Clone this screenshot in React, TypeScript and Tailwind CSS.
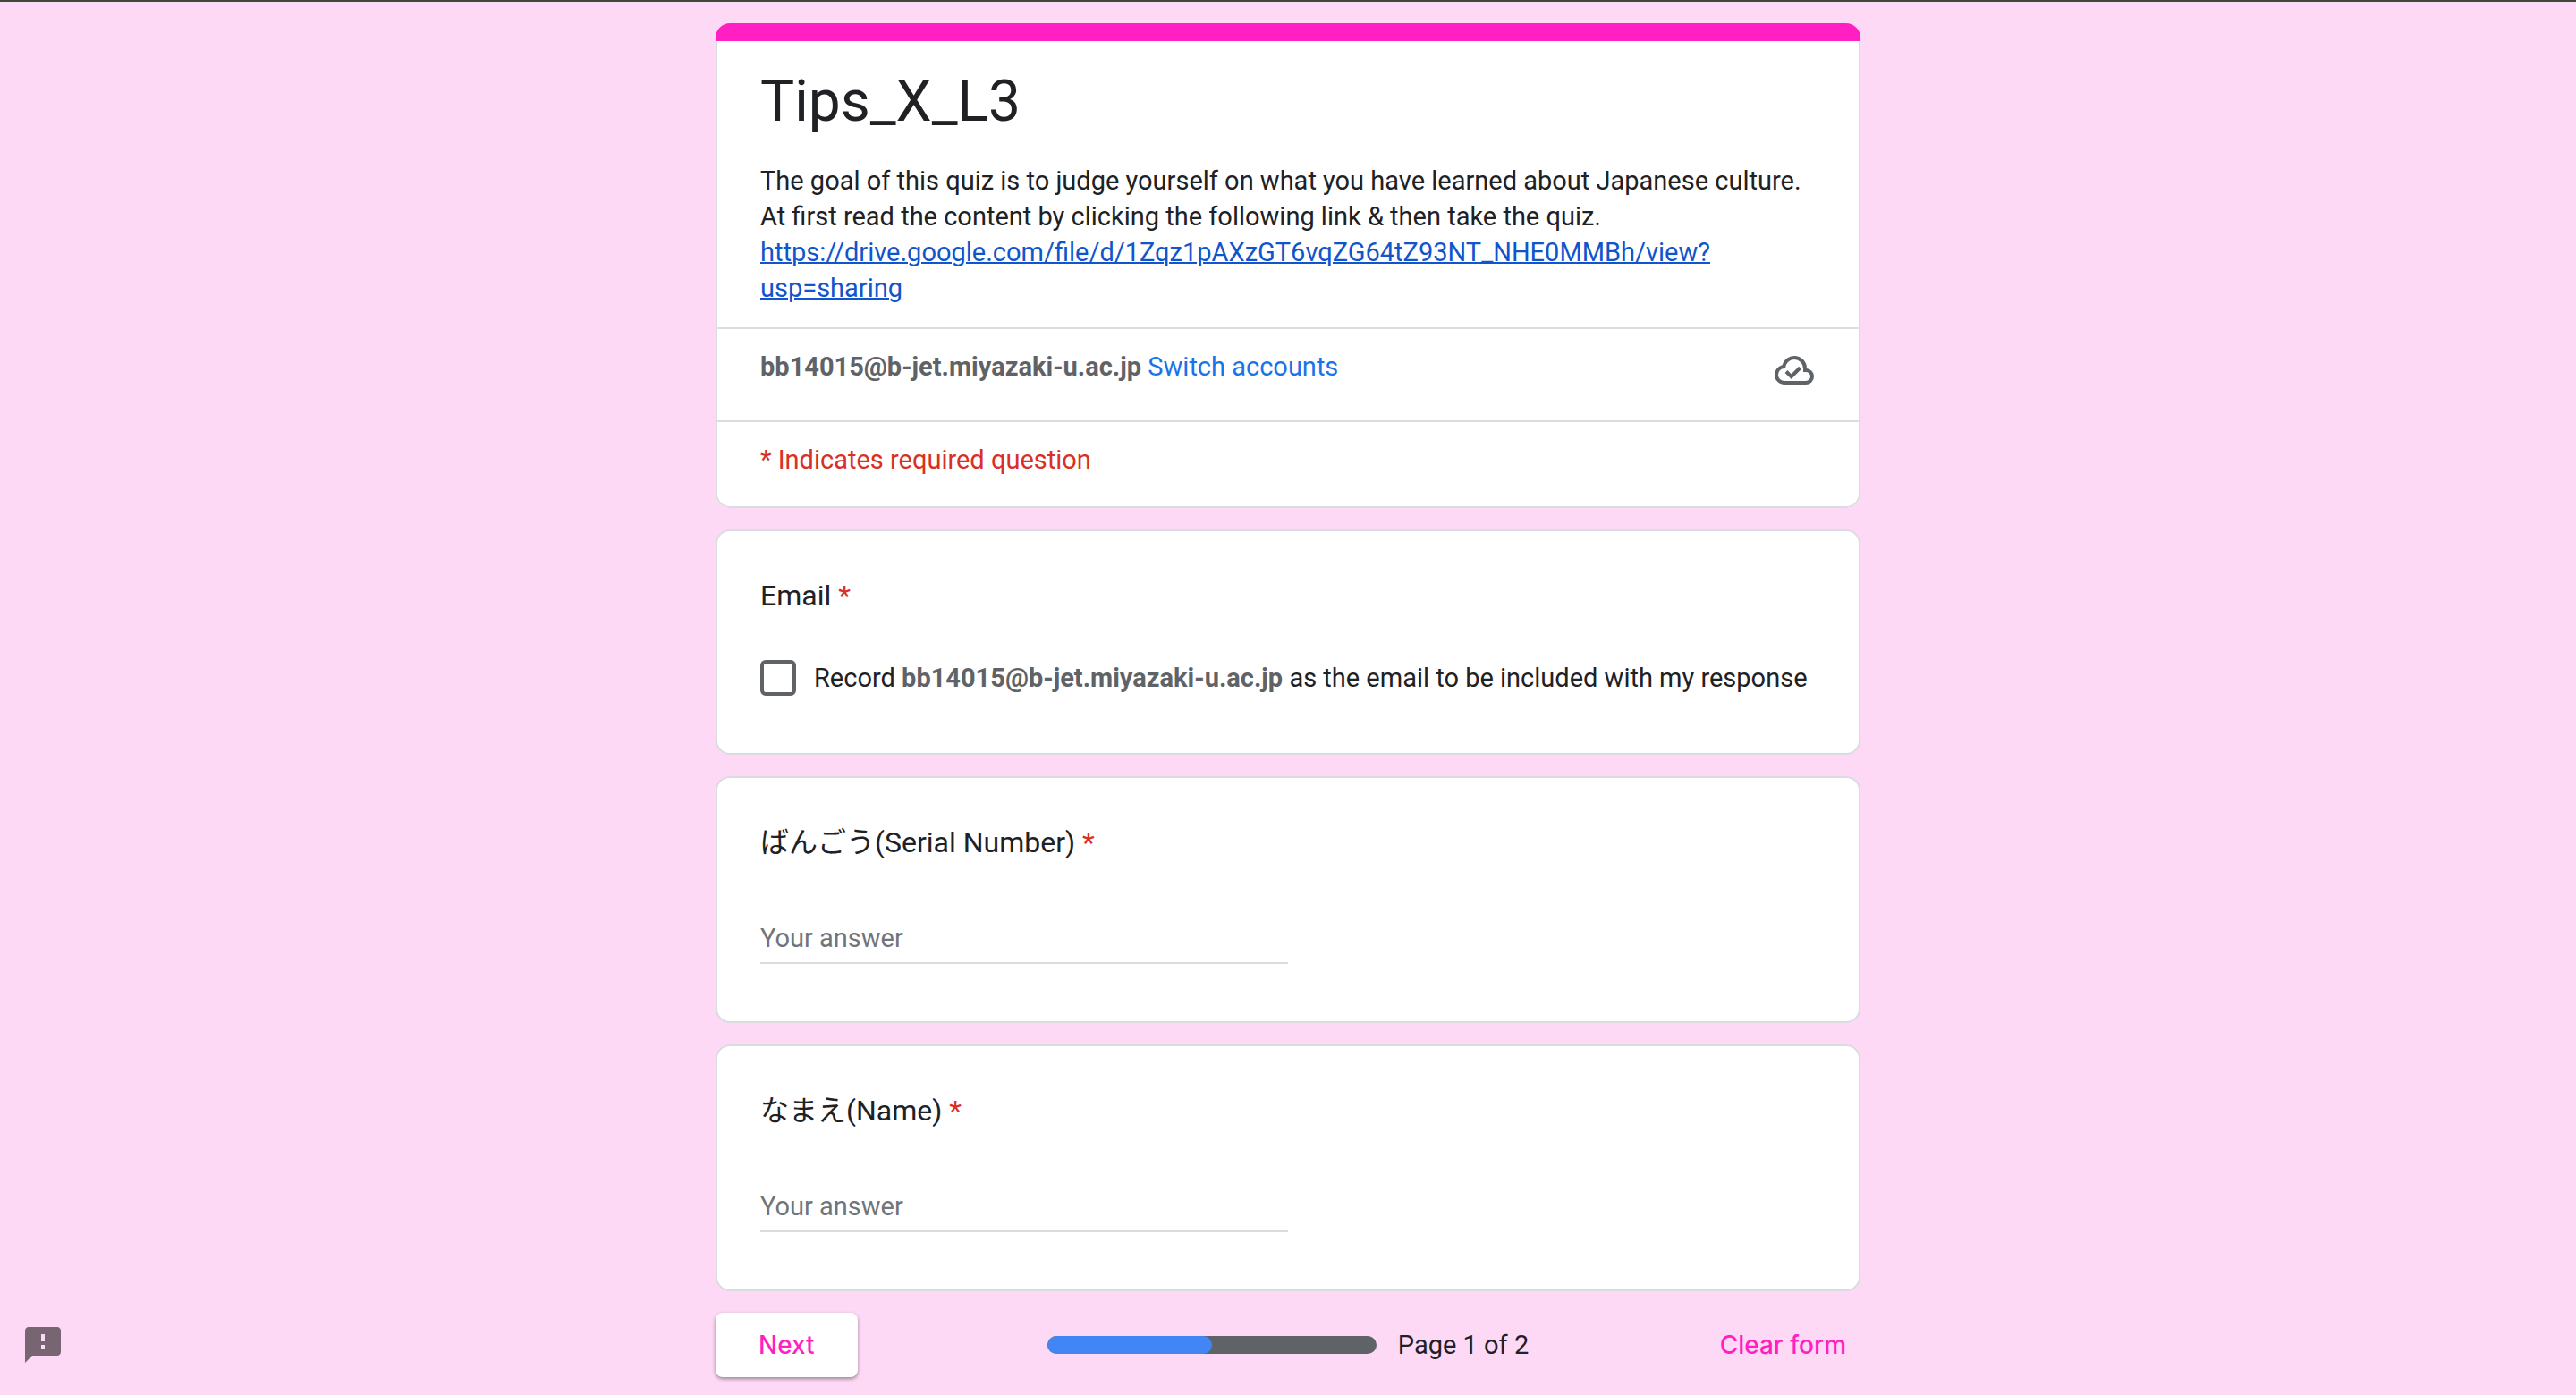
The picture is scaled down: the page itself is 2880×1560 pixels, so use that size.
import type { ReactNode } from "react";

const EMAIL = "bb14015@b-jet.miyazaki-u.ac.jp";

function Card({ children }: { children: ReactNode }) {
  return (
    <section className="rounded-2xl border-2 border-[#dadce0] bg-white px-12 pt-12 pb-16">
      {children}
    </section>
  );
}

function Required() {
  return <span className="text-[#d93025]">*</span>;
}

function TextQuestion({ id, label }: { id: string; label: string }) {
  return (
    <Card>
      <label htmlFor={id} className="block text-[32px] leading-[48px]">
        {label} <Required />
      </label>
      <input
        id={id}
        type="text"
        placeholder="Your answer"
        className="mt-14 block h-14 w-1/2 border-b-2 border-[#dadce0] bg-transparent outline-none placeholder:text-[#70757a]"
      />
    </Card>
  );
}

function CloudDoneIcon() {
  return (
    <svg viewBox="0 -960 960 960" className="size-12 fill-[#5f6368]" aria-label="Saved" role="img">
      <path d="m414-280 226-226-58-58-169 169-84-84-57 57 142 142ZM260-160q-91 0-155.5-63T40-377q0-78 47-139t123-78q25-92 100-149t170-57q117 0 198.5 81.5T760-520q69 8 114.5 59.5T920-340q0 75-52.5 127.5T740-160H260Zm0-80h480q42 0 71-29t29-71q0-42-29-71t-71-29h-60v-80q0-83-58.5-141.5T480-720q-83 0-141.5 58.5T280-520h-20q-58 0-99 41t-41 99q0 58 41 99t99 41Z" />
    </svg>
  );
}

export default function App() {
  return (
    <div className="min-h-screen border-t-2 border-[#3f4739] bg-[#fdd9f5] pt-6 font-['Roboto','Noto_Sans_CJK_JP',sans-serif] text-[29px] leading-10 text-[#202124]">
      <main className="mx-auto w-full max-w-[1280px]">
        <form className="flex flex-col gap-6" onSubmit={(e) => e.preventDefault()}>
          <header className="overflow-hidden rounded-2xl bg-white">
            <div className="h-5 bg-[#ff1fc2]" />
            <div className="rounded-b-2xl border-2 border-t-0 border-[#dadce0]">
              <div className="px-12 py-6">
                <h1 className="text-[64px] leading-[88px]">Tips_X_L3</h1>
                <p className="mt-6">
                  The goal of this quiz is to judge yourself on what you have learned about Japanese culture.
                  <br />
                  At first read the content by clicking the following link &amp; then take the quiz.
                  <br />
                  <a href="#drive" className="text-[#1155cc] underline decoration-2">
                    https://drive.google.com/file/d/1Zqz1pAXzGT6vqZG64tZ93NT_NHE0MMBh/view?
                    <wbr />
                    usp=sharing
                  </a>
                </p>
              </div>
              <div className="flex items-start justify-between border-t-2 border-[#dadce0] px-12 pt-[22px] pb-8">
                <p>
                  <b className="text-[#5f6368]">{EMAIL}</b>{" "}
                  <a href="#switch" className="text-[#1a73e8]">Switch accounts</a>
                </p>
                <CloudDoneIcon />
              </div>
              <p className="border-t-2 border-[#dadce0] px-12 pt-[22px] pb-8 text-[#d93025]">
                * Indicates required question
              </p>
            </div>
          </header>

          <Card>
            <h2 className="text-[32px] leading-[48px]">
              Email <Required />
            </h2>
            <label className="mt-12 flex items-center gap-5">
              <input
                type="checkbox"
                className="size-10 shrink-0 appearance-none rounded-md border-4 border-[#5f6368] bg-white checked:bg-[#5f6368]"
              />
              <span>
                Record <b className="text-[#5f6368]">{EMAIL}</b> as the email to be included with my response
              </span>
            </label>
          </Card>

          <TextQuestion id="serial" label="ばんごう(Serial Number)" />
          <TextQuestion id="name" label="なまえ(Name)" />

          <footer className="grid grid-cols-[1fr_auto_1fr] items-center">
            <button
              type="submit"
              className="h-[72px] justify-self-start rounded-lg bg-white px-12 font-['Inter',sans-serif] text-[28px] font-medium text-[#ff1fc2] shadow-[0_2px_4px_rgba(0,0,0,0.4)]"
            >
              Next
            </button>
            <div className="flex items-center gap-6">
              <div
                role="progressbar"
                aria-label="Form progress"
                aria-valuenow={50}
                className="h-5 w-[368px] overflow-hidden rounded-full bg-[#5f6368]"
              >
                <div className="h-full w-1/2 rounded-full bg-[#4285f4]" />
              </div>
              <span>Page 1 of 2</span>
            </div>
            <button
              type="reset"
              className="justify-self-end px-4 font-['Inter',sans-serif] text-[28px] font-medium text-[#ff1fc2]"
            >
              Clear form
            </button>
          </footer>
        </form>
      </main>
      <button type="button" aria-label="Report a problem" className="fixed bottom-8 left-6">
        <svg viewBox="0 0 24 24" className="size-12 fill-[#776672]">
          <path d="M20 2H4c-1.100 0-1.990.900-1.990 2L2 22l4-4h14c1.100 0 2-.900 2-2V4c0-1.100-.900-2-2-2zm-7 12h-2v-2h2v2zm0-4h-2V6h2v4z" />
        </svg>
      </button>
    </div>
  );
}
